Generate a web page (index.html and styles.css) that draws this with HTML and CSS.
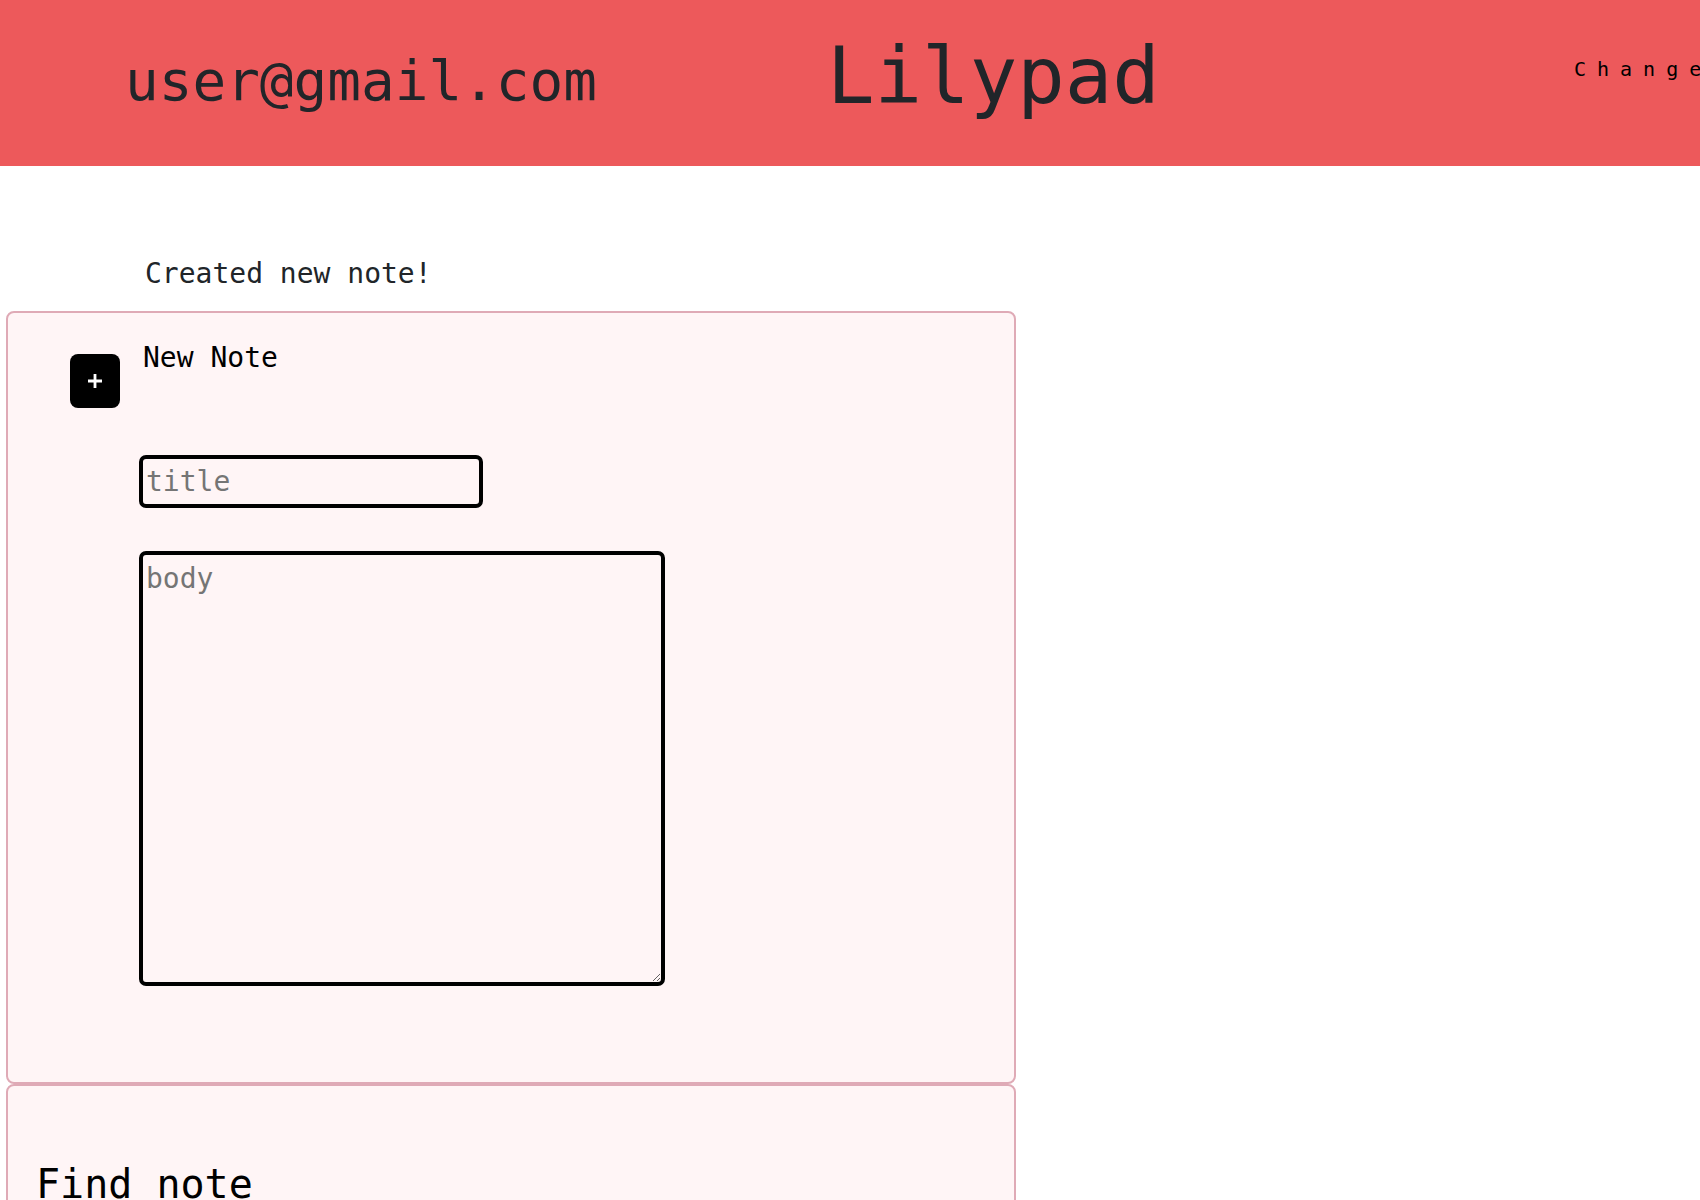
FILE: index.html
```html
<!DOCTYPE html>
<html lang="en">
<head>
<meta charset="utf-8">
<title>Lilypad</title>
<link rel="stylesheet" href="styles.css">
</head>
<body>
<header class="topbar">
  <div class="user-email">user@gmail.com</div>
  <h1 class="brand">Lilypad</h1>
  <a class="theme-link" href="#">Change theme</a>
</header>
<main class="content">
  <p class="flash">Created new note!</p>
  <section class="card card-new">
    <button class="add-btn" type="button" aria-label="Add note">
      <svg width="16" height="16" viewBox="0 0 16 16"><path d="M8 1v14M1 8h14" stroke="#fff" stroke-width="2.8" fill="none"/></svg>
    </button>
    <form class="note-form">
      <h2 class="form-title">New Note</h2>
      <input class="field field-title" type="text" placeholder="title">
      <textarea class="field field-body" placeholder="body"></textarea>
    </form>
  </section>
  <section class="card card-find">
    <h2 class="find-title">Find note</h2>
    <input class="field field-search" type="text" placeholder="search">
  </section>
</main>
</body>
</html>
```

FILE: styles.css
```css
html, body {
  margin: 0;
  padding: 0;
  background: #ffffff;
}
body {
  font-family: "DejaVu Sans Mono", "Liberation Mono", monospace;
  color: #212529;
  overflow-x: hidden;
}
.topbar {
  display: flex;
  align-items: flex-start;
  height: 166px;
  background: #ed595b;
  overflow: hidden;
  white-space: nowrap;
}
.topbar > * {
  flex-shrink: 0;
}
.user-email {
  margin-left: 125px;
  padding-top: 53px;
  width: 702px;
  font-size: 56px;
  line-height: 1;
}
.brand {
  margin: 0;
  padding-top: 37px;
  width: 747px;
  font-size: 79px;
  font-weight: normal;
  line-height: 1;
}
.theme-link {
  padding-top: 59px;
  font-size: 20px;
  line-height: 1;
  letter-spacing: 11px;
  color: #000;
  text-decoration: none;
}
.content {
  padding-top: 94px;
}
.flash {
  margin: 0 0 23px 145px;
  font-size: 28px;
  line-height: 1;
  color: #212529;
}
.card {
  box-sizing: border-box;
  width: 1010px;
  margin-left: 6px;
  border: 2px solid #dfaab6;
  border-radius: 8px;
  background: #fff5f6;
}
.card-new {
  display: flex;
  align-items: flex-start;
  padding: 31px 0 96px 62px;
}
.add-btn {
  display: flex;
  align-items: center;
  justify-content: center;
  width: 50px;
  height: 54px;
  margin-top: 10px;
  margin-right: 19px;
  padding: 0;
  border: 0;
  border-radius: 8px;
  background: #000;
}
.note-form {
  display: flex;
  flex-direction: column;
  align-items: flex-start;
}
.form-title {
  margin: 0 0 83px 4px;
  font-size: 28px;
  font-weight: normal;
  line-height: 1;
  color: #000;
}
.field {
  box-sizing: border-box;
  border: 4px solid #000;
  border-radius: 7px;
  background: #fff5f6;
  font-family: "DejaVu Sans Mono", "Liberation Mono", monospace;
  font-size: 28px;
  color: #000;
  padding: 0 3px;
}
.field::placeholder {
  color: #757575;
}
.field-title {
  width: 344px;
  height: 53px;
  margin-bottom: 43px;
}
.field-body {
  width: 526px;
  height: 435px;
  padding-top: 7px;
  resize: both;
}
.card-find {
  padding: 78px 0 40px 28px;
}
.find-title {
  margin: 0 0 30px 0;
  font-size: 40px;
  font-weight: normal;
  line-height: 1;
  color: #000;
}
.field-search {
  width: 344px;
  height: 51px;
}
```
